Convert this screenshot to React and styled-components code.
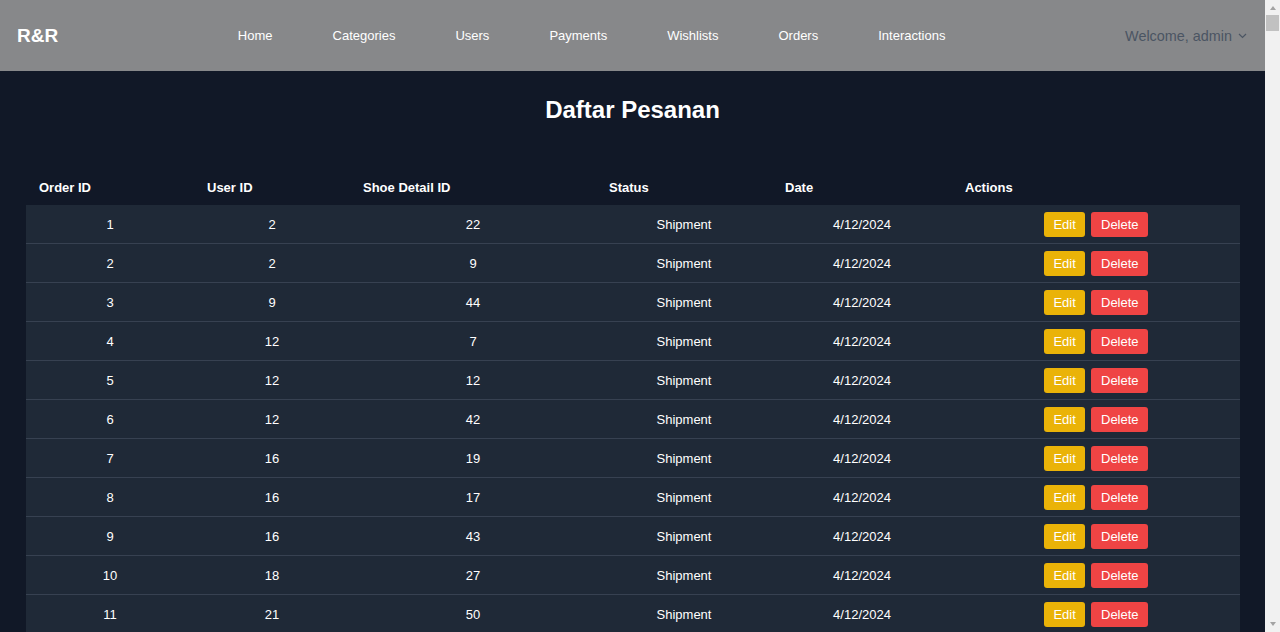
import styled, { createGlobalStyle } from "styled-components";

const GlobalStyle = createGlobalStyle`
    html, body {
        margin: 0;
        padding: 0;
        font-family: "Liberation Sans", Arial, sans-serif;
    }
    html {
        background-color: #f1f1f1;
    }
    #root {
        width: calc(100% - 15px);
        background-color: #111827;
    }
`;

const ORDERS = [
    { id: 1, user: 2, shoe: 22 },
    { id: 2, user: 2, shoe: 9 },
    { id: 3, user: 9, shoe: 44 },
    { id: 4, user: 12, shoe: 7 },
    { id: 5, user: 12, shoe: 12 },
    { id: 6, user: 12, shoe: 42 },
    { id: 7, user: 16, shoe: 19 },
    { id: 8, user: 16, shoe: 17 },
    { id: 9, user: 16, shoe: 43 },
    { id: 10, user: 18, shoe: 27 },
    { id: 11, user: 21, shoe: 50 },
    { id: 12, user: 21, shoe: 31 },
    { id: 13, user: 24, shoe: 15 },
];

const LINKS = ["Home", "Categories", "Users", "Payments", "Wishlists", "Orders", "Interactions"];

const COLUMNS = [
    { label: "Order ID", width: 168 },
    { label: "User ID", width: 156 },
    { label: "Shoe Detail ID", width: 246 },
    { label: "Status", width: 176 },
    { label: "Date", width: 180 },
    { label: "Actions", width: 288 },
];

const App = () => {
    return (
        <>
            <GlobalStyle />
            <Nav>
                <Brand>R&amp;R</Brand>
                <LinkList>
                    {LINKS.map((link) => (
                        <NavLink key={link}>{link}</NavLink>
                    ))}
                </LinkList>
                <Welcome>
                    Welcome, admin
                    <svg width="9" height="6" viewBox="0 0 9 6" fill="none">
                        <path d="M1 1l3.5 3.5L8 1" stroke="#4b5563" strokeWidth="1.2" />
                    </svg>
                </Welcome>
            </Nav>
            <Main>
                <Title>Daftar Pesanan</Title>
                <Table>
                    <colgroup>
                        {COLUMNS.map((col) => (
                            <col key={col.label} style={{ width: col.width }} />
                        ))}
                    </colgroup>
                    <thead>
                        <tr>
                            {COLUMNS.map((col) => (
                                <Th key={col.label}>{col.label}</Th>
                            ))}
                        </tr>
                    </thead>
                    <tbody>
                        {ORDERS.map((order) => (
                            <Row key={order.id}>
                                <Td>{order.id}</Td>
                                <Td>{order.user}</Td>
                                <Td>{order.shoe}</Td>
                                <Td>Shipment</Td>
                                <Td>4/12/2024</Td>
                                <Td>
                                    <Actions>
                                        <Button $color="#eab308">Edit</Button>
                                        <Button $color="#ef4444">Delete</Button>
                                    </Actions>
                                </Td>
                            </Row>
                        ))}
                    </tbody>
                </Table>
            </Main>
            <ScrollTrack>
                <Arrow $dir="up" />
                <Thumb />
                <Arrow $dir="down" />
            </ScrollTrack>
        </>
    );
};

const Nav = styled.nav`
    height: 71px;
    padding: 0 18px 0 17px;
    display: flex;
    align-items: center;
    justify-content: space-between;
    background-color: #87888a;
`;

const Brand = styled.div`
    color: #ffffff;
    font-size: 19px;
    font-weight: 700;
`;

const LinkList = styled.div`
    display: flex;
    gap: 60px;
`;

const NavLink = styled.a`
    color: #ffffff;
    font-size: 13px;
    cursor: pointer;
`;

const Welcome = styled.div`
    display: flex;
    align-items: center;
    gap: 6px;
    color: #4b5563;
    font-size: 14.4px;
`;

const Main = styled.main`
    padding: 25px 26px 0;
`;

const Title = styled.h1`
    margin: 0 0 41px;
    text-align: center;
    color: #ffffff;
    font-size: 24px;
    line-height: 28px;
    font-weight: 700;
`;

const Table = styled.table`
    width: 100%;
    border-collapse: collapse;
    table-layout: fixed;
    color: #ffffff;
    font-size: 13px;
`;

const Th = styled.th`
    height: 35px;
    padding: 5px 13px 0;
    text-align: left;
    font-weight: 700;
`;

const Row = styled.tr`
    background-color: #1f2937;
    border-bottom: 1px solid #374151;
`;

const Td = styled.td`
    height: 38px;
    padding: 0 12px;
    text-align: center;
`;

const Actions = styled.div`
    display: flex;
    justify-content: center;
    gap: 6px;
`;

const Button = styled.button`
    height: 25px;
    padding: 0 9.6px;
    border: none;
    border-radius: 3px;
    background-color: ${(p) => p.$color};
    color: #ffffff;
    font-family: inherit;
    font-size: 13px;
    cursor: pointer;
`;

const ScrollTrack = styled.div`
    position: fixed;
    top: 0;
    right: 0;
    bottom: 0;
    width: 15px;
    display: flex;
    flex-direction: column;
    align-items: center;
    background-color: #f1f1f1;
`;

const Arrow = styled.div`
    width: 0;
    height: 0;
    margin: ${(p) => (p.$dir === "up" ? "6px 0 5px" : "auto 0 6px")};
    border-left: 3.5px solid transparent;
    border-right: 3.5px solid transparent;
    ${(p) => (p.$dir === "up" ? "border-bottom" : "border-top")}: 4px solid #a3a3a3;
`;

const Thumb = styled.div`
    width: 13px;
    height: 16px;
    background-color: #c1c1c1;
`;

export default App;
